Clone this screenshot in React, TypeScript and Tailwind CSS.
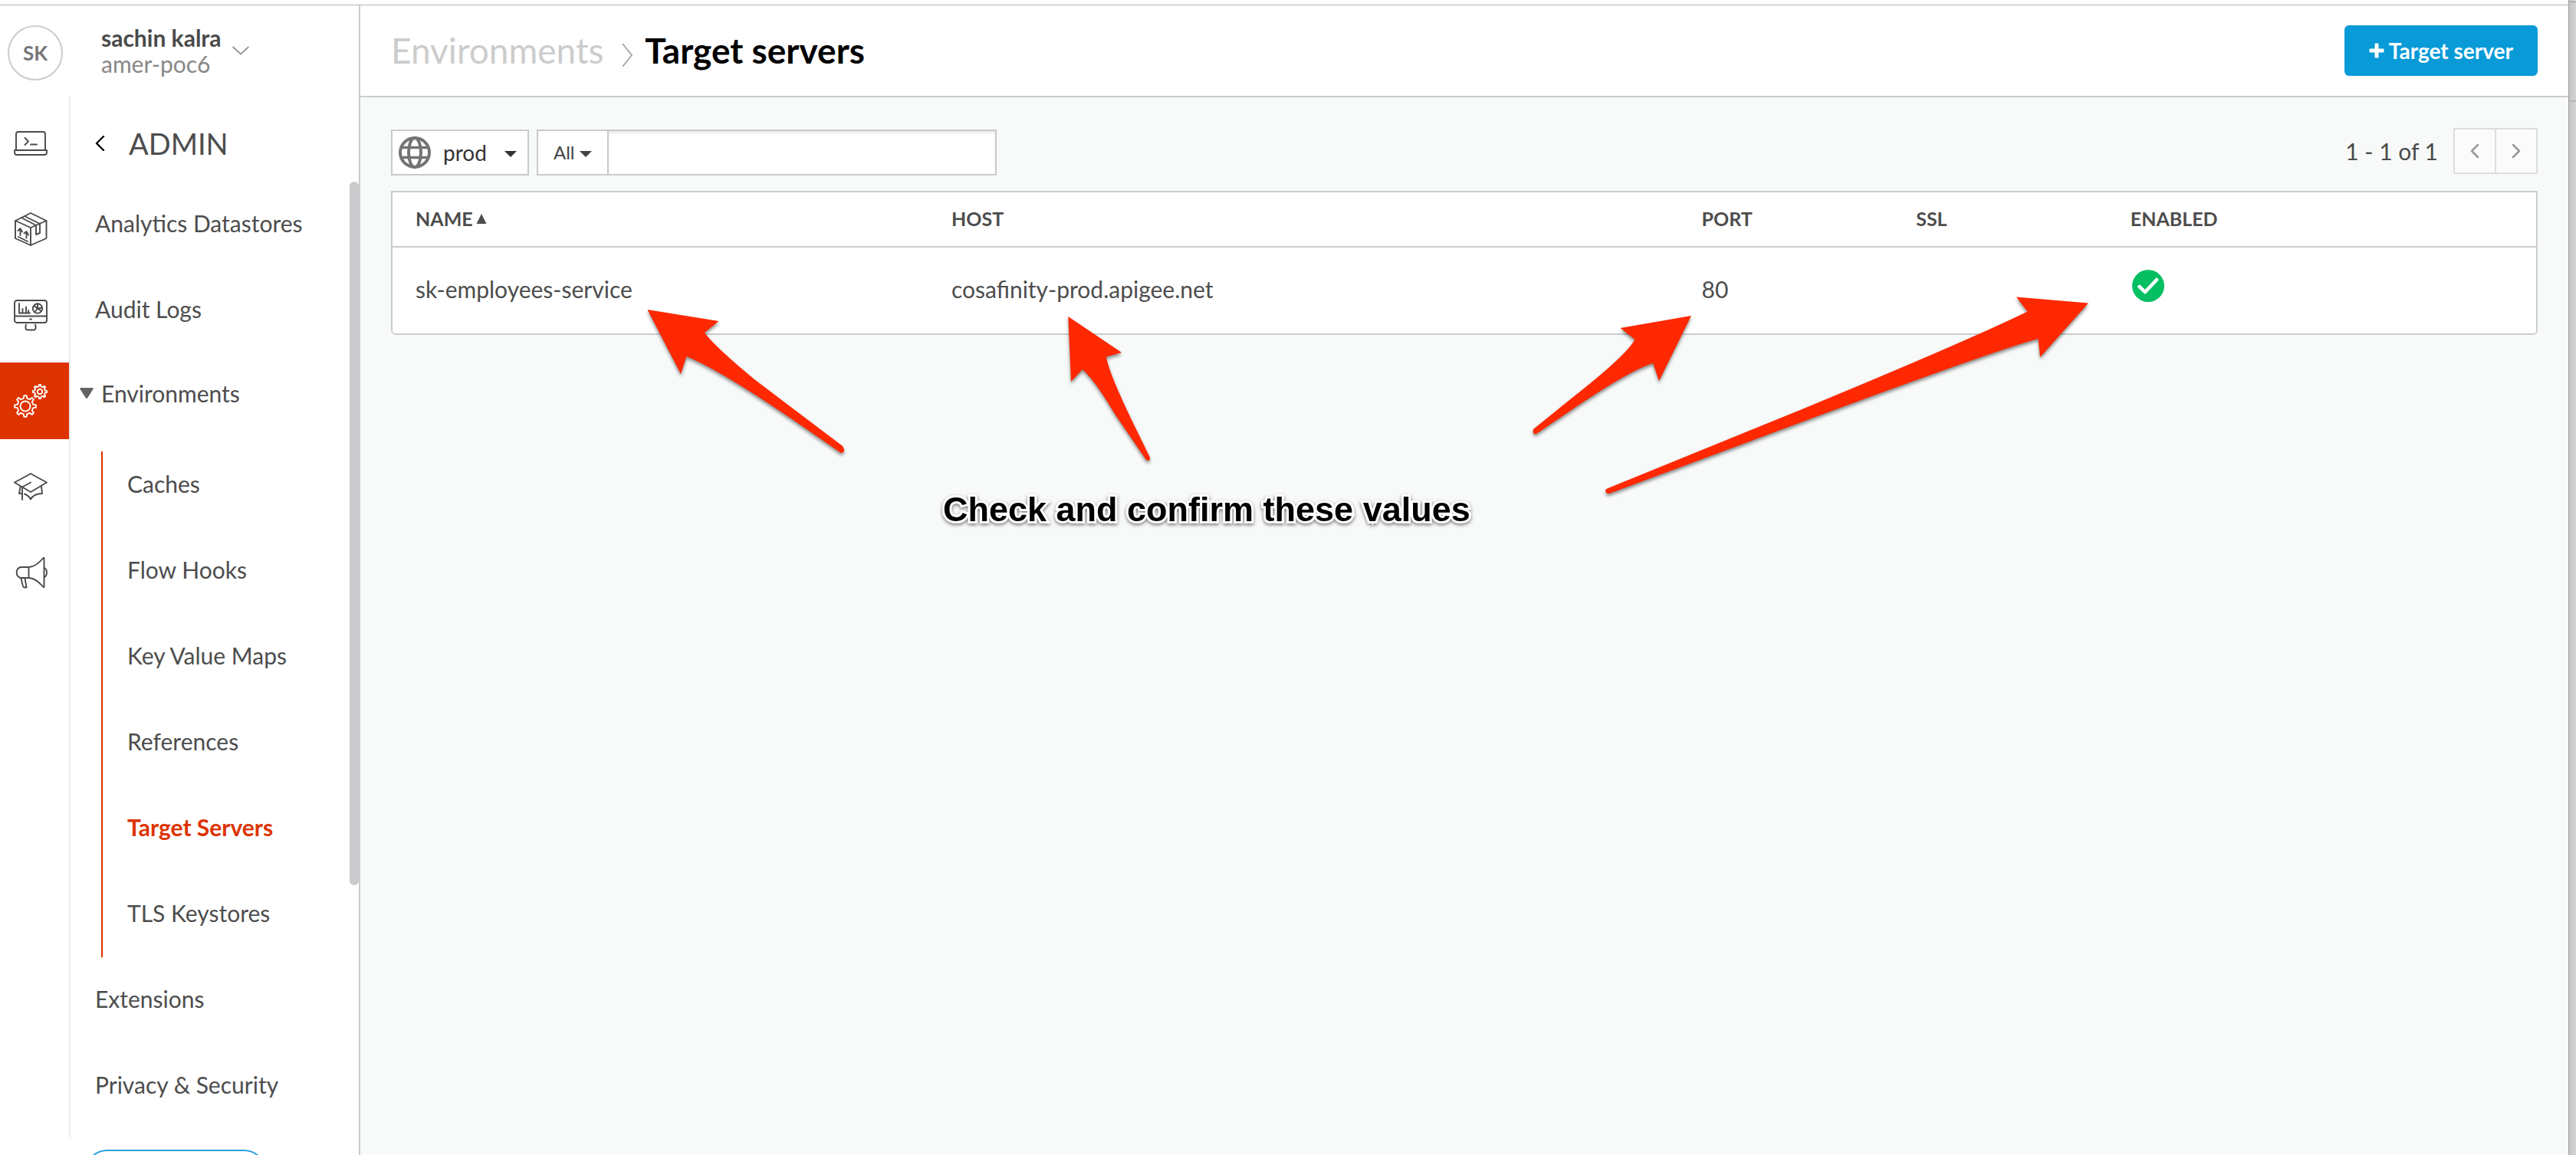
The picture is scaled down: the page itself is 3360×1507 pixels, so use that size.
import type { ReactNode } from "react";

function gearPath(cx: number, cy: number, outer: number, inner: number, teeth: number) {
  const step = (Math.PI * 2) / teeth;
  const pts: string[] = [];
  for (let i = 0; i < teeth; i++) {
    const a = i * step - Math.PI / 2;
    const corners: [number, number][] = [
      [inner, a - step * 0.26],
      [outer, a - step * 0.15],
      [outer, a + step * 0.15],
      [inner, a + step * 0.26],
    ];
    for (const [r, t] of corners) {
      pts.push(`${(cx + r * Math.cos(t)).toFixed(2)} ${(cy + r * Math.sin(t)).toFixed(2)}`);
    }
  }
  return `M${pts.join("L")}Z`;
}

function RailIcon({ children }: { children: ReactNode }) {
  return (
    <svg
      viewBox="0 0 44 44"
      className="size-11"
      fill="none"
      stroke="currentColor"
      strokeWidth="1.9"
      strokeLinecap="round"
      strokeLinejoin="round"
      aria-hidden="true"
    >
      {children}
    </svg>
  );
}

const railItems: { label: string; active?: boolean; icon: ReactNode }[] = [
  {
    label: "Develop",
    icon: (
      <>
        <path d="M3 30V10Q3 7 6 7H38Q41 7 41 10V30" />
        <path d="M1 31H43V34Q43 37 40 37H4Q1 37 1 34Z" />
        <path d="M14.500 15L19 19.500L14.500 24M22 23.500H30" />
      </>
    ),
  },
  {
    label: "Publish",
    icon: (
      <>
        <path d="M22 1L42.500 11V34L22 43L2 34V11Z" />
        <path d="M2 11L22 20L42.500 11M22 20V43" />
        <path d="M14 5L34 15M10 7L29 17V29L34 27V15" />
        <path d="M8.500 30V22M5.500 24L8.500 21L11 25.500M16.500 33.500V26M13.500 27.500L16.500 25L19 29.500M6 32L18 38" />
      </>
    ),
  },
  {
    label: "Analyze",
    icon: (
      <>
        <rect x="1" y="3" width="42" height="29" rx="3" />
        <path d="M1 23.500H43M21 27.500H23M16 34.500Q15 38 15.500 39.500Q16 41.500 18 41.500H26Q28 41.500 28.500 39.500Q29 38 28 34.500" />
        <path d="M7 7V19.500H21M11.500 19V14M16 19V11.500M19 19V16" />
        <circle cx="31" cy="13.500" r="6.200" />
        <path d="M31 7.500V13.500L37 12.500M31 13.500L27 18.500M31 13.500L26.500 10M31 13.500L36 17" />
      </>
    ),
  },
  {
    label: "Admin",
    active: true,
    icon: (
      <>
        <path d={gearPath(15, 29, 14, 10.5, 8)} />
        <circle cx="15" cy="29" r="6.500" />
        <path d={gearPath(34, 10, 9.2, 7, 8)} />
        <circle cx="34" cy="10" r="3.200" />
      </>
    ),
  },
  {
    label: "Learn",
    icon: (
      <>
        <path d="M22 5L43 16.500L22 29L1 16.500Z" />
        <path d="M22 16.500L11 22.500V39M8.500 22L7 31Q10 30.500 11 30.500M14 31.500Q20 34 22 38.500Q26 31 37 31L36 22" />
      </>
    ),
  },
  {
    label: "Announcements",
    icon: (
      <>
        <path d="M19.500 15H8.500A7.500 7.500 0 0 0 8.500 29H19.500ZM19.500 15Q29 14.500 38.500 3H39.500V41H38.500Q29 29.500 19.500 29" />
        <path d="M40 16Q43 17.500 43 22Q43 26.500 40 28M9.500 30L12 40Q12.500 41.500 14 41.500H16.500L14.500 29.500" />
      </>
    ),
  },
];

const environmentLinks = [
  "Caches",
  "Flow Hooks",
  "Key Value Maps",
  "References",
  "Target Servers",
  "TLS Keystores",
];

function Caret() {
  return (
    <svg viewBox="0 0 16 8" className="h-2 w-4" fill="currentColor" aria-hidden="true">
      <path d="M0 0H16L8 8Z" />
    </svg>
  );
}

function Chevron({ d, className }: { d: string; className: string }) {
  return (
    <svg
      viewBox="0 0 20 20"
      className={className}
      fill="none"
      stroke="currentColor"
      strokeLinecap="round"
      strokeLinejoin="round"
      aria-hidden="true"
    >
      <path d={d} />
    </svg>
  );
}

function Globe() {
  return (
    <svg viewBox="0 0 42 42" className="size-[42px] shrink-0 text-[#737373]" fill="none" stroke="currentColor" strokeWidth="4" aria-hidden="true">
      <circle cx="21" cy="21" r="19" />
      <ellipse cx="21" cy="21" rx="8" ry="19" />
      <path d="M4 14.500H38M4 27.500H38" strokeWidth="3.500" />
    </svg>
  );
}

function Sidebar() {
  return (
    <aside className="relative flex w-[470px] shrink-0 flex-col overflow-hidden border-r-2 border-[#cbcbcd] bg-white">
      <div className="flex h-[118px] shrink-0 items-center pt-1.5 pl-[10px]">
        <span className="flex size-[72px] items-center justify-center rounded-full border-2 border-[#cccccc] text-[26px] font-bold text-[#777777]">
          SK
        </span>
        <button type="button" className="ml-[50px] flex items-center gap-3.5 pb-1.5 text-left text-[30px] leading-[34px]">
          <span className="flex flex-col">
            <span className="font-bold text-[#4a4a4a]">sachin kalra</span>
            <span className="text-[#888888]">amer-poc6</span>
          </span>
          <Chevron d="M1 6L10 14L19 6" className="size-[22px] stroke-[1.8] text-[#999999]" />
        </button>
      </div>

      <div className="flex min-h-0 flex-1">
        <nav aria-label="Sections" className="mb-[23px] flex w-[92px] shrink-0 flex-col gap-3 border-r-2 border-[#ebebeb] pt-3">
          {railItems.map((item) => (
            <button
              key={item.label}
              type="button"
              aria-label={item.label}
              className={
                item.active
                  ? "flex h-[100px] items-center bg-[#dd3300] pl-[18px] text-white"
                  : "flex h-[100px] items-center pl-[18px] text-[#4a4a4a]"
              }
            >
              <RailIcon>{item.icon}</RailIcon>
            </button>
          ))}
        </nav>

        <nav aria-label="Admin" className="flex flex-1 flex-col text-[30px] leading-9 text-[#4d4d4d]">
          <button type="button" className="mt-10 flex items-center gap-7 pl-7 text-[38px] leading-[44px]">
            <Chevron d="M15 1L6 10L15 19" className="size-5 stroke-[2.4] text-black" />
            ADMIN
          </button>
          <a href="#analytics-datastores" className="mt-16 pl-8">Analytics Datastores</a>
          <a href="#audit-logs" className="mt-[76px] pl-8">Audit Logs</a>
          <button type="button" aria-expanded="true" className="mt-[74px] flex items-center gap-2.5 pl-3">
            <svg viewBox="0 0 18 14" className="h-[14px] w-[18px] text-[#606464]" fill="currentColor" aria-hidden="true">
              <path d="M1.500 0H16.500Q18.500 0 17.300 2L10.300 13Q9 14.800 7.700 13L0.700 2Q-0.500 0 1.500 0Z" />
            </svg>
            Environments
          </button>
          <ul className="mt-[58px] ml-10 flex flex-col gap-[76px] border-l-2 border-[#dd3300] pt-6 pb-10 pl-8">
            {environmentLinks.map((label) => (
              <li key={label} className="flex">
                <a
                  href={`#${label.toLowerCase().replace(/ /g, "-")}`}
                  aria-current={label === "Target Servers" ? "page" : undefined}
                  className={label === "Target Servers" ? "font-bold text-[#dd3300]" : ""}
                >
                  {label}
                </a>
              </li>
            ))}
          </ul>
          <a href="#extensions" className="mt-9 pl-8">Extensions</a>
          <a href="#privacy-security" className="mt-[76px] pl-8">Privacy &amp; Security</a>
          <button
            type="button"
            aria-label="More"
            className="mt-[67px] ml-[18px] h-[60px] w-[238px] shrink-0 rounded-full border-2 border-[#2aa0dc]"
          />
        </nav>
      </div>
      <span className="absolute top-[230px] right-0 h-[918px] w-3 rounded-full bg-[#cbcbcd]" aria-hidden="true" />
    </aside>
  );
}

function Toolbar() {
  return (
    <div className="flex items-start justify-between">
      <div className="flex gap-[10px] pt-[2px]">
        <label className="relative flex h-[60px] w-[180px] items-center border-2 border-[#c9cacb] bg-white pl-2 text-[#333333]">
          <Globe />
          <select aria-label="Environment" className="h-full w-full appearance-none bg-transparent pl-4 text-[28px] outline-none">
            <option>prod</option>
          </select>
          <span className="pointer-events-none absolute right-[14px] mt-1">
            <Caret />
          </span>
        </label>
        <div className="flex h-[60px] w-[600px] border-2 border-[#c9cacb] bg-white text-[#444444]">
          <label className="relative flex w-[92px] shrink-0 items-center border-r-2 border-[#c9cacb]">
            <select aria-label="Filter by" className="h-full w-full appearance-none bg-transparent pl-5 text-[24px] outline-none">
              <option>All</option>
            </select>
            <span className="pointer-events-none absolute right-5 mt-1">
              <Caret />
            </span>
          </label>
          <input type="text" aria-label="Search" className="min-w-0 flex-1 px-3 text-[24px] shadow-[inset_0_3px_3px_rgba(0,0,0,0.08)] outline-none" />
        </div>
      </div>

      <div className="flex items-center gap-5 text-[30px] text-[#4a4a4a]">
        <span>1 - 1 of 1</span>
        <div className="flex h-[60px] w-[110px] border-2 border-[#dcdddd] bg-[#fbfbfb] text-[#999999]">
          <button type="button" aria-label="Previous page" className="flex w-[54px] items-center justify-center border-r-2 border-[#dcdddd]">
            <Chevron d="M14 2L6 10L14 18" className="size-5 stroke-[2.5]" />
          </button>
          <button type="button" aria-label="Next page" className="flex flex-1 items-center justify-center">
            <Chevron d="M6 2L14 10L6 18" className="size-5 stroke-[2.5]" />
          </button>
        </div>
      </div>
    </div>
  );
}

function ServersTable() {
  return (
    <div className="mt-5 overflow-hidden rounded-b-[6px] border-2 border-[#cbcccc] bg-white">
      <table className="w-full table-fixed text-left text-[#4d4d4d]">
        <colgroup>
          <col className="w-1/4" />
          <col className="w-[35%]" />
          <col className="w-[10%]" />
          <col className="w-[10%]" />
          <col className="w-1/5" />
        </colgroup>
        <thead>
          <tr className="h-[71px] border-b-2 border-[#cbcccc] text-[25px]">
            <th scope="col" className="pb-px pl-[30px] font-bold">
              <button type="button" className="flex items-center gap-1">
                NAME
                <svg viewBox="0 0 14 14" className="size-[14px]" fill="currentColor" aria-hidden="true">
                  <path d="M7 0L13.500 13H0.500Z" />
                </svg>
              </button>
            </th>
            <th scope="col" className="pb-px pl-[30px] font-bold">HOST</th>
            <th scope="col" className="pb-px pl-[30px] font-bold">PORT</th>
            <th scope="col" className="pb-px pl-[30px] font-bold">SSL</th>
            <th scope="col" className="pb-px pl-[30px] font-bold">ENABLED</th>
          </tr>
        </thead>
        <tbody>
          <tr className="h-[113px] text-[30px]">
            <td className="pb-1 pl-[30px]">sk-employees-service</td>
            <td className="pb-1 pl-[30px]">cosafinity-prod.apigee.net</td>
            <td className="pb-1 pl-[30px]">80</td>
            <td />
            <td className="pb-1 pl-8">
              <svg viewBox="0 0 42 42" className="mb-2 size-[42px]" role="img" aria-label="Enabled">
                <circle cx="21" cy="21" r="21" fill="#06bf63" />
                <path d="M9.500 22L17 29L32 13" fill="none" stroke="white" strokeWidth="4.500" strokeLinecap="round" strokeLinejoin="round" />
              </svg>
            </td>
          </tr>
        </tbody>
      </table>
    </div>
  );
}

function Annotations() {
  return (
    <div className="pointer-events-none absolute top-0 left-0">
      <svg
        viewBox="840 380 1900 280"
        className="absolute top-[373px] left-[370px] h-[280px] w-[1900px] drop-shadow-[0_3px_2px_rgba(0,0,0,0.45)]"
        fill="#ff2800"
        aria-hidden="true"
      >
        <path d="M844.500 404L937.500 419L919 434Q931 451 984 495L1099 582Q1104 590 1097 591L1042 553Q940 483 895.500 465L888 488Z" />
        <path d="M1393.300 413L1463 460L1443 465.500Q1446 486 1478 552L1500 597Q1500 603 1495 600L1454 540Q1428 496 1412 482L1397 498Z" />
        <path d="M2206 412L2164 497L2156 474Q2128 482 2054 532L2004 566Q1998 567 2000 560L2052 518Q2122 463 2132.400 443L2113.500 428Z" />
        <path d="M2724 395.500L2661 466L2658.500 442Q2600 458 2368 544L2099 644Q2092 643 2095 638L2348 535Q2570 443 2644.500 406.500L2630 387.500Z" />
      </svg>
      <p className="absolute top-[632px] left-[760px] font-['Liberation_Sans'] text-[45px] leading-[52px] font-bold whitespace-nowrap text-black drop-shadow-[0_2px_2px_rgba(0,0,0,0.5)] [paint-order:stroke_fill] [-webkit-text-stroke:6px_white]">
        Check and confirm these values
      </p>
    </div>
  );
}

export default function App() {
  return (
    <div className="flex h-screen overflow-hidden bg-white font-[Lato,sans-serif]">
      <div className="flex min-w-0 flex-1 flex-col">
        <div className="h-[7px] shrink-0 border-b border-[#b3b3b3]" />
        <div className="flex min-h-0 flex-1">
          <Sidebar />
          <main className="relative min-w-0 flex-1 bg-[#f8faf9]">
            <header className="flex h-[120px] items-center justify-between border-b-2 border-[#cbcccc] bg-white px-10">
              <nav aria-label="Breadcrumb" className="flex items-center pb-px text-[46px]">
                <a href="#environments" className="text-[#cccccc]">Environments</a>
                <svg viewBox="0 0 14 30" className="mt-3 mr-4 ml-6 h-[30px] w-[14px] text-[#aaaaaa]" fill="none" stroke="currentColor" strokeWidth="2" aria-hidden="true">
                  <path d="M1 0L13 15L1 30" />
                </svg>
                <h1 className="font-bold text-black">Target servers</h1>
              </nav>
              <button type="button" className="flex h-[66px] items-center gap-1.5 rounded-[6px] bg-[#089bd7] px-8 text-[28px] font-bold text-white">
                <svg viewBox="0 0 20 20" className="size-5" fill="currentColor" aria-hidden="true">
                  <path d="M7.500 1.500Q7.500 0.500 8.500 0.500H11.500Q12.500 0.500 12.500 1.500V7.500H18.500Q19.500 7.500 19.500 8.500V11.500Q19.500 12.500 18.500 12.500H12.500V18.500Q12.500 19.500 11.500 19.500H8.500Q7.500 19.500 7.500 18.500V12.500H1.500Q0.500 12.500 0.500 11.500V8.500Q0.500 7.500 1.500 7.500H7.500Z" />
                </svg>
                Target server
              </button>
            </header>
            <section className="px-10 pt-10">
              <Toolbar />
              <ServersTable />
            </section>
            <Annotations />
          </main>
        </div>
      </div>
      <div className="flex w-[10px] shrink-0 flex-col border-l border-[#9f9f9f] bg-linear-to-r from-[#c4c5c5] to-[#d4d4d4]" aria-hidden="true">
        <div className="h-[3px] border-b border-[#999999]" />
        <div className="h-[130px] border-b-2 border-[#b8b8b8]" />
      </div>
    </div>
  );
}
